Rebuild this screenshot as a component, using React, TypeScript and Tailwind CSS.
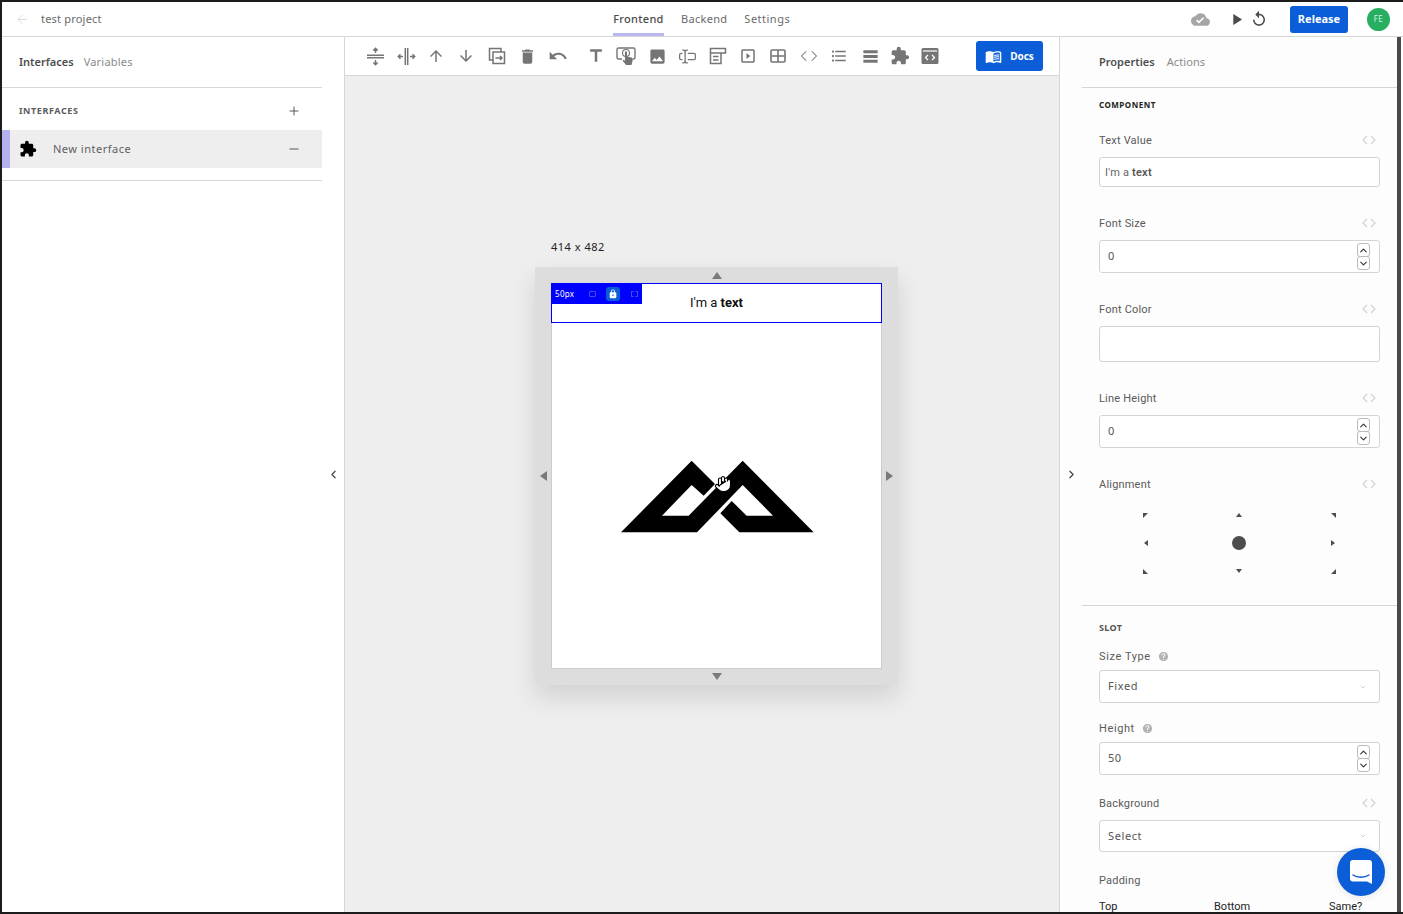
import React from 'react';
import { ArrowLeft, ChevronLeft, ChevronRight, ChevronUp, ChevronDown, Plus, Minus, Hand, TextCursorInput, Code } from 'lucide-react';
import {
  MdArrowUpward, MdArrowDownward, MdDelete, MdUndo, MdTitle, MdImage, MdReplay, MdLock,
  MdOutlineSlideshow, MdFormatListBulleted, MdTableRows, MdExtension, MdCloudDone, MdPlayArrow, MdMenuBook, MdHelp,
} from 'react-icons/md';

const SpreadIcon = ({ className }: { className?: string }) => (
  <svg width="19" height="19" viewBox="0 0 19 19" fill="none" stroke="currentColor" strokeWidth="1.500" className={className}>
    <path d="M1 8.300h17M1 10.700h17" />
    <path d="M9.500 6V1.500M7.300 3.500l2.200-2.200 2.200 2.200" />
    <path d="M9.500 13v4.500M7.300 15.500l2.200 2.200 2.200-2.200" />
  </svg>
);

const CopyIcon = () => (
  <svg width="18" height="18" viewBox="0 0 18 18" fill="none" stroke="currentColor" strokeWidth="1.500">
    <path d="M5 13H1.500V1.500H13V5" />
    <path d="M5 5h11.500v11.500H5z" />
    <path d="M7.500 11h6.500M12 9l2 2-2 2" />
  </svg>
);

const TouchIcon = () => (
  <svg width="20" height="20" viewBox="0 0 20 20">
    <path d="M6 13H2.500a1.500 1.500 0 0 1-1.500-1.500v-8A1.500 1.500 0 0 1 2.500 2h15A1.500 1.500 0 0 1 19 3.500v8a1.500 1.500 0 0 1-1.500 1.500H17" fill="none" stroke="currentColor" strokeWidth="1.400" />
    <circle cx="10" cy="7" r="3.500" fill="none" stroke="currentColor" strokeWidth="1.100" />
    <path d="M9 6.300a1 1 0 0 1 2 0v4.200l4.500 1a1.500 1.500 0 0 1 1.200 1.500v1.500L15.500 19H10l-3.500-4.500 1-.8 1.500 1z" fill="currentColor" />
  </svg>
);

const FormIcon = () => (
  <svg width="18" height="18" viewBox="0 0 18 18" fill="none" stroke="currentColor" strokeWidth="1.500">
    <path d="M12 6H1.500v10.500H12V6" />
    <path d="M1.500 6V1.500h15V6H12" />
    <path d="M4 9.500h5.500M4 13h5.500" />
  </svg>
);

const TableIcon = () => (
  <svg width="16" height="16" viewBox="0 0 16 16" fill="none" stroke="currentColor" strokeWidth="1.600">
    <rect x="1" y="2" width="14" height="12" rx="1" />
    <path d="M1 8h14M8 2v12" />
  </svg>
);

const EmbedIcon = () => (
  <svg width="18" height="18" viewBox="0 0 18 18">
    <rect x="0.500" y="1" width="17" height="16" rx="1.500" fill="currentColor" />
    <path d="M2 4h14" stroke="#fff" strokeWidth="1.200" />
    <path d="M7 8l-2.500 2.500L7 13M11 8l2.500 2.500L11 13" stroke="#fff" strokeWidth="1.300" fill="none" />
  </svg>
);

const tools: { key: string; node: React.ReactNode; gap: string }[] = [
  { key: 'valign', node: <SpreadIcon />, gap: '' },
  { key: 'halign', node: <SpreadIcon className="rotate-90" />, gap: 'ml-[1px]' },
  { key: 'up', node: <MdArrowUpward size={18} />, gap: '' },
  { key: 'down', node: <MdArrowDownward size={18} />, gap: '' },
  { key: 'copy', node: <CopyIcon />, gap: 'ml-[1px]' },
  { key: 'delete', node: <MdDelete size={19} />, gap: '' },
  { key: 'undo', node: <MdUndo size={20} />, gap: 'ml-[1px]' },
  { key: 'title', node: <MdTitle size={20} />, gap: 'ml-[8px]' },
  { key: 'button', node: <TouchIcon />, gap: '' },
  { key: 'image', node: <MdImage size={19} />, gap: 'ml-[1px]' },
  { key: 'input', node: <TextCursorInput size={19} strokeWidth={1.6} />, gap: '' },
  { key: 'form', node: <FormIcon />, gap: 'ml-[1px]' },
  { key: 'video', node: <MdOutlineSlideshow size={18} />, gap: '' },
  { key: 'table', node: <TableIcon />, gap: '' },
  { key: 'code', node: <Code size={18} strokeWidth={1.4} />, gap: 'ml-[1px]' },
  { key: 'list', node: <MdFormatListBulleted size={18} />, gap: '' },
  { key: 'rows', node: <MdTableRows size={19} />, gap: 'ml-[1px]' },
  { key: 'extension', node: <MdExtension size={20} />, gap: '' },
  { key: 'embed', node: <EmbedIcon />, gap: '' },
];

const CodeToggle = () => (
  <svg width="14" height="10" viewBox="0 0 14 10" fill="none" stroke="#d2d2d2" strokeWidth="1.200" className="block">
    <path d="M5 1L1 5l4 4M9 1l4 4-4 4" />
  </svg>
);

const FieldLabel = ({ text, toggle = true, help = false }: { text: string; toggle?: boolean; help?: boolean }) => (
  <div className="flex h-[16px] items-center pr-1 text-[11px] text-[#5a5a5a]">
    <span className={`pt-[2px] font-['Roboto',sans-serif] ${help ? 'tracking-[0.6px]' : 'tracking-[0.2px]'}`}>{text}</span>
    {help && <MdHelp size={11} className="ml-[7px] text-[#b3b3b3]" />}
    {toggle && <span className="ml-auto"><CodeToggle /></span>}
  </div>
);

const NumberField = ({ value }: { value: string }) => (
  <div className="flex h-[33px] items-center justify-between rounded-[3px] border border-[#d4d4d4] bg-white pr-[9px] pl-2 text-[11px] tracking-[0.4px] text-[#555]">
    <span>{value}</span>
    <div className="flex flex-col text-[#333]">
      <span className="flex h-[14px] w-[13px] items-center justify-center rounded-[3px] border border-[#bbb]"><ChevronUp size={11} strokeWidth={2.4} /></span>
      <span className="-mt-[1px] flex h-[14px] w-[13px] items-center justify-center rounded-[3px] border border-[#bbb]"><ChevronDown size={11} strokeWidth={2.4} /></span>
    </div>
  </div>
);

const SelectField = ({ value, h }: { value: string; h: string }) => (
  <div className={`flex items-center justify-between rounded-[3px] border border-[#d4d4d4] bg-white pr-[12px] pl-2 text-[11px] tracking-[0.6px] text-[#555] ${h}`}>
    <span>{value}</span>
    <ChevronDown size={8} className="text-[#bbb]" />
  </div>
);

const Tri = ({ rot }: { rot: string }) => (
  <span className={`block h-0 w-0 border-x-[3px] border-b-[4px] border-x-transparent border-b-[#4d4d4d] ${rot}`} />
);

const Corner = ({ rot }: { rot: string }) => (
  <span className={`block h-0 w-0 border-t-[5px] border-r-[5px] border-t-[#4d4d4d] border-r-transparent ${rot}`} />
);

const Logo = () => (
  <svg width="230" height="100" viewBox="0 0 690 300" className="block">
    <polygon
      fill="#000"
      points="60,262 272,47 342,117 308,152 272,120 183,212 263,212 425,47 638,262 415,262 358,205 392,168 437,212 516,212 425,120 288,262"
    />
  </svg>
);

const App: React.FC = () => {
  return (
    <div className="flex h-[914px] w-[1403px] flex-col overflow-hidden border-y-2 border-l-2 border-[#1c1c1c] bg-white font-['Noto_Sans',sans-serif]">
      {/* Header */}
      <header className="relative flex h-[35px] shrink-0 items-center border-b border-[#d6d6d6] bg-white">
        <ArrowLeft size={15} strokeWidth={1.3} className="ml-[13px] text-[#d4d4d4]" />
        <span className="ml-[11px] text-[11px] tracking-[0.2px] text-[#6a6a6a]">test project</span>
        <nav className="absolute top-0 left-[611px] flex h-[34px] text-[11px] tracking-[0.3px] text-[#6a6a6a]">
          <span className="flex w-[51px] items-center justify-center border-b-[3px] border-[#b9b7ef] pt-[3px] font-medium text-[#4a4a4a]">Frontend</span>
          <span className="ml-[17px] flex items-center">Backend</span>
          <span className="ml-[17px] flex items-center tracking-[0.5px]">Settings</span>
        </nav>
        <div className="ml-auto flex items-center pr-[13px]">
          <MdCloudDone size={19} className="text-[#a6a6a6]" />
          <MdPlayArrow size={19} className="ml-[17px] text-[#4a4a4a]" />
          <MdReplay size={18} className="ml-[4px] text-[#4a4a4a]" />
          <span className="ml-[22px] flex h-[27px] w-[58px] items-center justify-center rounded-[3px] bg-[#0b5ed7] text-[11px] font-bold text-white">Release</span>
          <span className="ml-[19px] flex h-[23px] w-[23px] items-center justify-center rounded-full bg-[#27ae60] text-[8px] tracking-[0.5px] text-[#d5f0e0]">FE</span>
        </div>
      </header>

      <div className="flex min-h-0 flex-1">
        {/* Left sidebar */}
        <aside className="flex w-[343px] shrink-0 border-r border-[#d6d6d6] bg-white">
          <div className="w-[320px]">
            <div className="flex h-[51px] items-center gap-[10px] border-b border-[#d6d6d6] pl-[17px] text-[11px]">
              <span className="font-semibold text-[#4e4e4e]">Interfaces</span>
              <span className="tracking-[0.2px] text-[#8a8a8a]">Variables</span>
            </div>
            <div className="flex h-[42px] items-center justify-between pt-[4px] pr-[21px] pl-[17px]">
              <span className="text-[9px] font-bold tracking-[0.6px] text-[#5c5c5c]">INTERFACES</span>
              <Plus size={14} strokeWidth={1.500} className="text-[#444]" />
            </div>
            <div className="flex h-[38px] items-center bg-[#eeeeee] pr-[21px]">
              <span className="h-full w-[8px] bg-[#b3b2ef]" />
              <MdExtension size={18} className="ml-[9px] text-black" />
              <span className="ml-[16px] text-[11px] tracking-[0.5px] text-[#5f5f5f]">New interface</span>
              <Minus size={14} strokeWidth={1.500} className="ml-auto text-[#444]" />
            </div>
            <div className="mt-[12px] border-b border-[#d6d6d6]" />
          </div>
          <div className="flex flex-1 items-center justify-center">
            <ChevronLeft size={13} strokeWidth={2.2} className="text-[#444]" />
          </div>
        </aside>

        {/* Canvas column */}
        <main className="flex min-w-0 flex-1 flex-col bg-[#eeeeee]">
          <div className="flex h-[39px] shrink-0 items-center border-b border-[#d6d6d6] bg-white pl-[15px] text-[#757575]">
            {tools.map((t) => (
              <span key={t.key} className={`flex h-[20px] w-[30px] items-center justify-center ${t.gap}`}>{t.node}</span>
            ))}
            <span className="ml-[31px] flex h-[30px] w-[67px] items-center justify-center gap-[8px] rounded-[3px] bg-[#0b5ed7] text-[10px] font-bold text-white">
              <MdMenuBook size={17} />
              Docs
            </span>
          </div>
          <div className="flex flex-1 flex-col pt-[164px] pl-[190px]">
            <span className="h-[14px] pl-[16px] text-[11px] leading-[14px] tracking-[0.5px] text-[#222]">414 x 482</span>
            <div className="relative mt-[13px] h-[418px] w-[363px] bg-[#dddddd] p-[16px] shadow-[0_12px_24px_rgba(0,0,0,0.12)]">
              <span className="absolute top-[5px] left-[177px] h-0 w-0 border-x-[5px] border-b-[7px] border-x-transparent border-b-[#7a7a7a]" />
              <span className="absolute bottom-[5px] left-[177px] h-0 w-0 border-x-[5px] border-t-[7px] border-x-transparent border-t-[#7a7a7a]" />
              <span className="absolute top-[204px] left-[5px] h-0 w-0 border-y-[5px] border-r-[7px] border-y-transparent border-r-[#7a7a7a]" />
              <span className="absolute top-[204px] right-[5px] h-0 w-0 border-y-[5px] border-l-[7px] border-y-transparent border-l-[#7a7a7a]" />
              <div className="flex h-[386px] w-[331px] flex-col border border-t-0 border-[#cccccc] bg-white">
                <div className="relative -mx-[1px] flex h-[40px] justify-center border border-[#0000ff] pt-[11px] font-['Roboto',sans-serif] text-[13px] leading-[16px] text-[#111]">
                  <span>I'm a <b>text</b></span>
                  <div className="absolute top-0 left-0 flex h-[20px] w-[90px] items-center bg-[#0000ff] pb-[1px] pl-[3px] font-['Noto_Sans',sans-serif] text-[8px] tracking-[0.3px] text-white">
                    50px
                    <span className="ml-[15px] h-[6px] w-[7px] rounded-[1px] border border-[#4a4adf]" />
                    <span className="ml-[10px] flex h-[14px] w-[14px] items-center justify-center rounded-[3px] bg-[#0b5ed7]">
                      <MdLock size={10} />
                    </span>
                    <span className="ml-[11px] h-[6px] w-[7px] rounded-[1px] border border-dashed border-[#4a4adf]" />
                  </div>
                </div>
                <div className="relative flex flex-1 justify-center pt-[122px] pr-[2px]">
                  <Logo />
                  <Hand size={18} strokeWidth={1.500} fill="#fff" className="absolute top-[152px] left-[162px] text-black" />
                </div>
              </div>
            </div>
          </div>
        </main>

        {/* Properties */}
        <aside className="relative flex w-[344px] shrink-0 border-l border-[#d6d6d6] bg-[#fdfdfd]">
          <div className="flex w-[22px] shrink-0 items-center justify-center">
            <ChevronRight size={13} strokeWidth={2.2} className="text-[#444]" />
          </div>
          <div className="w-[315px] min-w-0 shrink-0">
            <div className="flex h-[51px] items-center gap-[12px] border-b border-[#d6d6d6] pl-[17px] text-[11px]">
              <span className="font-semibold text-[#4e4e4e]">Properties</span>
              <span className="tracking-[0.1px] text-[#8a8a8a]">Actions</span>
            </div>
            <div className="px-[17px]">
              <div className="mt-[10px] mb-[20px] flex h-[14px] items-center text-[8px] font-bold tracking-[0.5px] text-[#222]">COMPONENT</div>
              <FieldLabel text="Text Value" />
              <div className="mt-[9px] mb-[28px] flex h-[30px] items-center rounded-[3px] border border-[#d4d4d4] bg-white pl-[5px] font-['Roboto',sans-serif] text-[11px] tracking-[0.2px] text-[#666]">
                <span className="pt-[2px]">I'm a <b className="font-semibold text-[#555]">text</b></span>
              </div>
              <FieldLabel text="Font Size" />
              <div className="mt-[9px] mb-[28px]"><NumberField value="0" /></div>
              <FieldLabel text="Font Color" />
              <div className="mt-[9px] mb-[28px] h-[36px] rounded-[3px] border border-[#d4d4d4] bg-white" />
              <FieldLabel text="Line Height" />
              <div className="mt-[9px] mb-[28px]"><NumberField value="0" /></div>
              <FieldLabel text="Alignment" />
              <div className="mt-[9px] grid h-[84px] grid-cols-3 grid-rows-[28px_28px_28px] items-center justify-items-center">
                <Corner rot="" />
                <Tri rot="" />
                <Corner rot="rotate-90" />
                <Tri rot="-rotate-90" />
                <span className="h-[14px] w-[14px] rounded-full bg-[#4d4d4d]" />
                <Tri rot="rotate-90" />
                <Corner rot="-rotate-90" />
                <Tri rot="rotate-180" />
                <Corner rot="rotate-180" />
              </div>
            </div>
            <div className="mt-[20px] border-b border-[#d6d6d6]" />
            <div className="px-[17px]">
              <div className="mt-[15px] mb-[13px] flex h-[14px] items-center text-[9px] font-bold tracking-[0.4px] text-[#555]">SLOT</div>
              <FieldLabel text="Size Type" toggle={false} help />
              <div className="mt-[6px] mb-[17px]"><SelectField value="Fixed" h="h-[33px]" /></div>
              <FieldLabel text="Height" toggle={false} help />
              <div className="mt-[6px] mb-[20px]"><NumberField value="50" /></div>
              <FieldLabel text="Background" />
              <div className="mt-[9px] mb-[20px]"><SelectField value="Select" h="h-[32px]" /></div>
              <FieldLabel text="Padding" toggle={false} />
              <div className="mt-[11px] grid grid-cols-[115px_115px_1fr] font-['Roboto',sans-serif] text-[11px] text-[#222]">
                <span>Top</span>
                <span>Bottom</span>
                <span>Same?</span>
              </div>
            </div>
          </div>
          <div className="w-[4px] shrink-0 bg-[#4a4a4a]" />
          <div className="absolute right-[18px] bottom-[16px] flex h-[48px] w-[48px] items-center justify-center rounded-full bg-[#0b5ed7] shadow-[0_1px_8px_rgba(0,0,0,0.1)]">
            <svg width="22" height="24" viewBox="0 0 22 24">
              <path d="M3 0h16a3 3 0 0 1 3 3v21l-5-2.500H3a3 3 0 0 1-3-3V3a3 3 0 0 1 3-3z" fill="#fff" />
              <path d="M3 15c4.500 3 11.500 3 16 0" fill="none" stroke="#0b5ed7" strokeWidth="1.500" strokeLinecap="round" />
            </svg>
          </div>
        </aside>
      </div>
    </div>
  );
};

export default App;
